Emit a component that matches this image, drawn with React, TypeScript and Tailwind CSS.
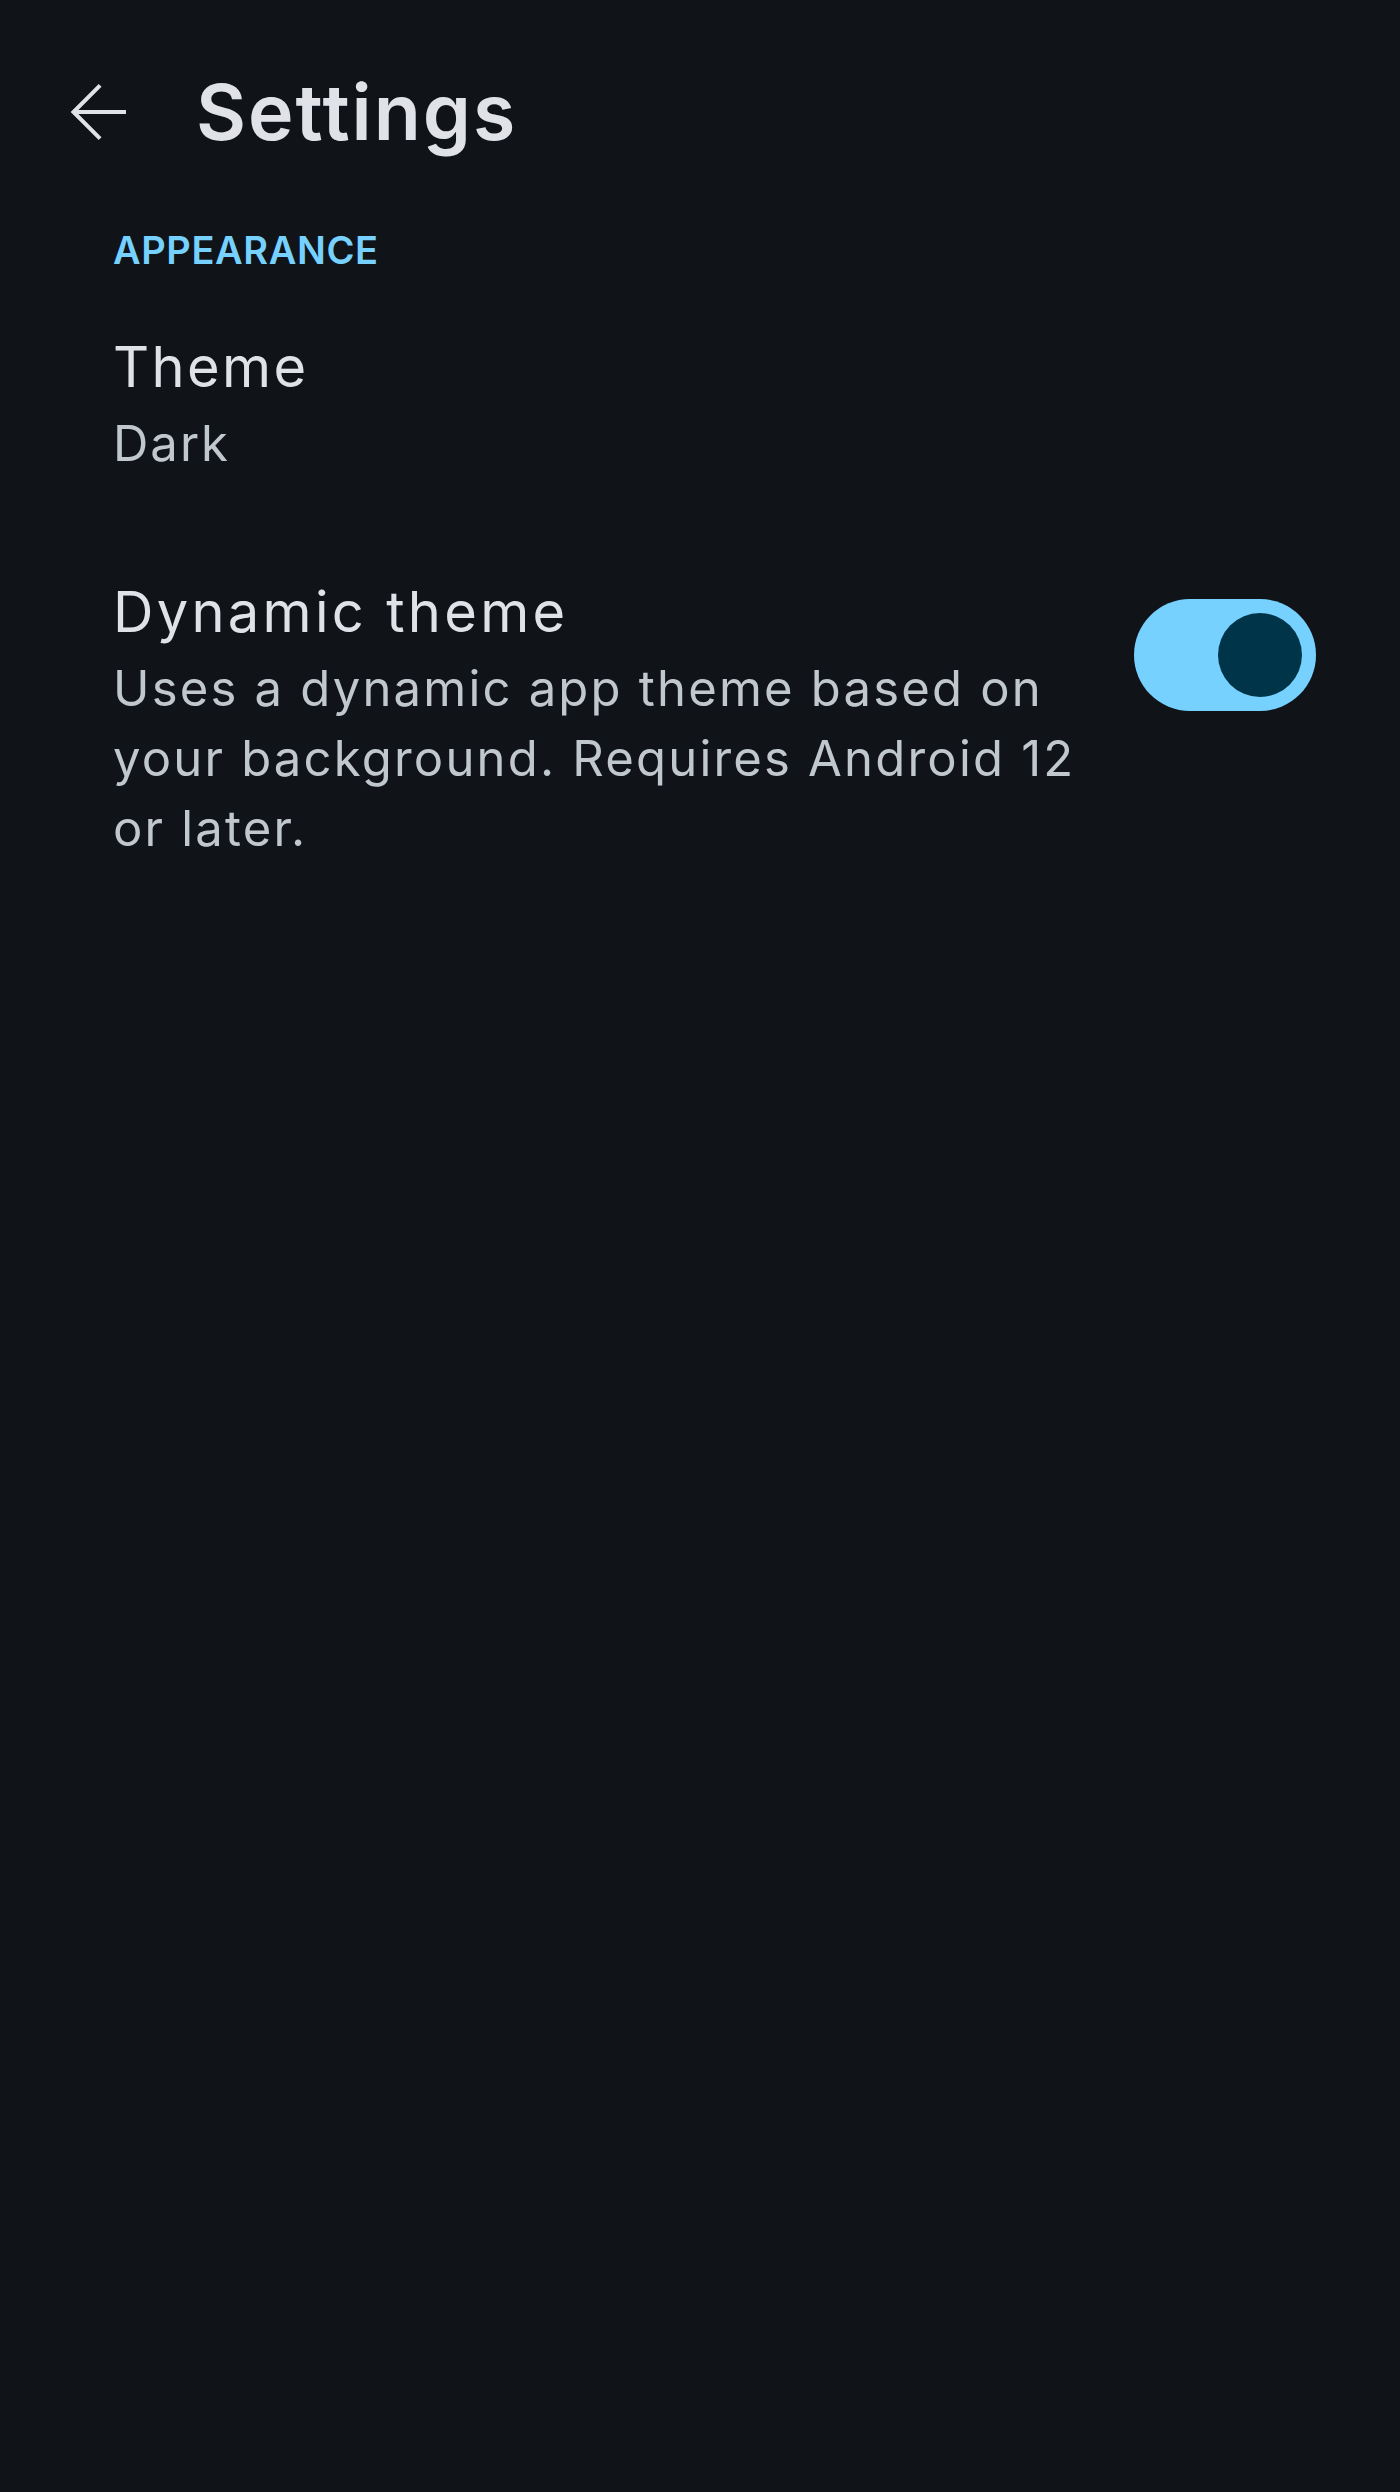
import { useState } from "react";

function BackArrow() {
  return (
    <svg
      viewBox="0 0 24 24"
      className="h-[84px] w-[84px]"
      fill="none"
      stroke="currentColor"
      strokeWidth={1.15}
    >
      <path d="M20 12H5.2" />
      <path d="M12.6 4.4L5 12l7.6 7.6" />
    </svg>
  );
}

function Toggle({ on, onChange }: { on: boolean; onChange: () => void }) {
  return (
    <button
      onClick={onChange}
      className={
        on
          ? "mt-[27px] flex h-[112px] w-[182px] flex-shrink-0 items-center justify-end rounded-full bg-[#76d1ff] pr-[14px]"
          : "mt-[27px] flex h-[112px] w-[182px] flex-shrink-0 items-center justify-start rounded-full border-[7px] border-[#8a9297] bg-[#30353a] pl-[20px]"
      }
    >
      <div
        className={
          on
            ? "h-[84px] w-[84px] rounded-full bg-[#003549]"
            : "h-[56px] w-[56px] rounded-full bg-[#8a9297]"
        }
      />
    </button>
  );
}

export default function App() {
  const [dynamic, setDynamic] = useState(true);

  return (
    <div className="min-h-[2492px] w-full bg-[#101418] font-['Inter','Noto_Sans',sans-serif]">
      {/* Top bar */}
      <div className="flex h-[224px] items-center">
        <button className="ml-[14px] flex h-[168px] w-[168px] items-center justify-center text-[#e0e2e8]">
          <BackArrow />
        </button>
        <h1 className="ml-[14px] text-[77px] leading-[224px] font-semibold tracking-[2px] text-[#e0e2e8]">
          Settings
        </h1>
      </div>

      {/* Appearance section */}
      <div className="mt-[6px] pl-[113px] text-[38px] leading-[40px] font-semibold tracking-[0.6px] text-[#76d1ff]">
        APPEARANCE
      </div>

      <div className="mt-[57px] flex flex-col pl-[113px]">
        <span className="text-[56px] leading-[80px] tracking-[2.4px] text-[#e0e2e8]">
          Theme
        </span>
        <span className="mt-[2px] text-[49px] leading-[70px] tracking-[2px] text-[#c0c7cd]">
          Dark
        </span>
      </div>

      <div className="mt-[93px] flex items-start gap-[40px] pr-[84px] pl-[113px]">
        <div className="flex min-w-0 flex-1 flex-col">
          <span className="text-[56px] leading-[80px] tracking-[3.3px] text-[#e0e2e8]">
            Dynamic theme
          </span>
          <p className="mt-[2px] text-[49px] leading-[70px] tracking-[2.2px] text-[#c0c7cd]">
            Uses a dynamic app theme based on your background. Requires Android
            12 or later.
          </p>
        </div>
        <Toggle on={dynamic} onChange={() => setDynamic(!dynamic)} />
      </div>
    </div>
  );
}
